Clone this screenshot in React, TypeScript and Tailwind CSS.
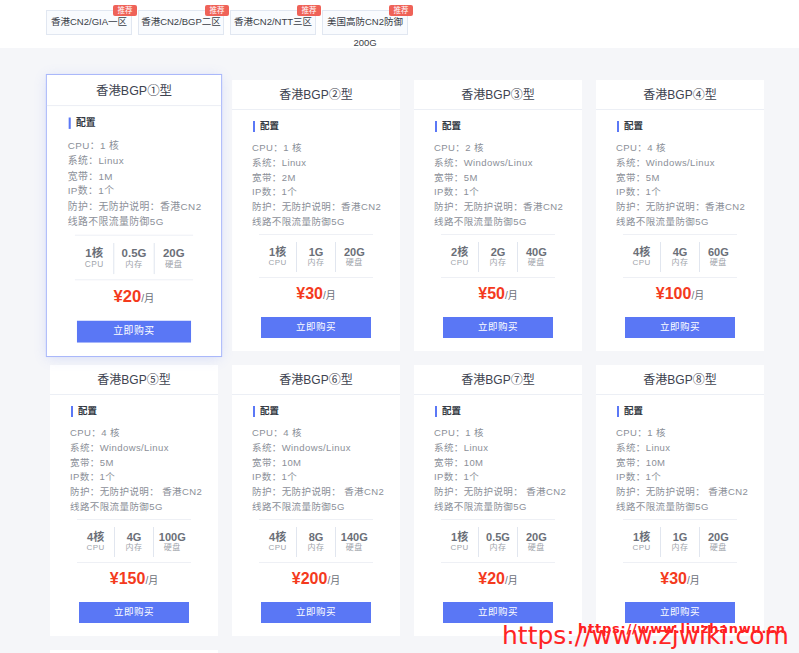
import { FunctionComponent } from "react";

interface Plan {
    title: string,
    cpu: string,
    os: string,
    bw: string,
    spaced: boolean,
    stats: string[],
    price: string
}

const tabs = ["香港CN2/GIA一区", "香港CN2/BGP二区", "香港CN2/NTT三区", "美国高防CN2防御200G"];

const plans: Plan[] = [
    { title: "香港BGP①型", cpu: "1", os: "Linux", bw: "1M", spaced: false, stats: ["1核", "0.5G", "20G"], price: "20" },
    { title: "香港BGP②型", cpu: "1", os: "Linux", bw: "2M", spaced: false, stats: ["1核", "1G", "20G"], price: "30" },
    { title: "香港BGP③型", cpu: "2", os: "Windows/Linux", bw: "5M", spaced: false, stats: ["2核", "2G", "40G"], price: "50" },
    { title: "香港BGP④型", cpu: "4", os: "Windows/Linux", bw: "5M", spaced: false, stats: ["4核", "4G", "60G"], price: "100" },
    { title: "香港BGP⑤型", cpu: "4", os: "Windows/Linux", bw: "5M", spaced: true, stats: ["4核", "4G", "100G"], price: "150" },
    { title: "香港BGP⑥型", cpu: "4", os: "Windows/Linux", bw: "10M", spaced: true, stats: ["4核", "8G", "140G"], price: "200" },
    { title: "香港BGP⑦型", cpu: "1", os: "Linux", bw: "10M", spaced: true, stats: ["1核", "0.5G", "20G"], price: "20" },
    { title: "香港BGP⑧型", cpu: "1", os: "Linux", bw: "10M", spaced: true, stats: ["1核", "1G", "20G"], price: "30" },
    { title: "香港BGP⑨型", cpu: "2", os: "Linux", bw: "10M", spaced: true, stats: ["2核", "2G", "40G"], price: "50" },
];

const statLabels = ["CPU", "内存", "硬盘"];

const PlanCard: FunctionComponent<{ plan: Plan, active?: boolean }> = ({ plan, active }) => {
    return (
        <div className={active
            ? "bg-white h-[271px] flex flex-col scale-[1.037] ring-1 ring-[#a9b8fa] shadow-[0_2px_12px_rgba(90,119,245,0.18)] relative z-10"
            : "bg-white h-[271px] flex flex-col"}>
            <div className="h-[30px] border-b border-[#eceff5] flex items-center justify-center text-[12px] text-[#3e4350]">
                {plan.title}
            </div>

            <div className="pl-[21px] mt-[10px] h-[12px] flex items-center">
                <span className="w-[2px] h-[11px] bg-[#5b78f6]"></span>
                <span className="ml-[5px] text-[9.5px] font-bold text-[#333842]">配置</span>
            </div>

            <ul className="pl-[20px] mt-[9px] text-[9.5px] leading-[14.8px] tracking-[0.4px] text-[#8b8f98]">
                <li>CPU：{plan.cpu} 核</li>
                <li>系统：{plan.os}</li>
                <li>宽带：{plan.bw}</li>
                <li>IP数：1个</li>
                <li>防护：无防护说明：{plan.spaced ? "  " : ""}香港CN2</li>
                <li>线路不限流量防御5G</li>
            </ul>

            <div className="mx-[27px] mt-[4px] h-[44px] border-y border-[#eef0f5] flex items-center">
                {plan.stats.map((s, i) => {
                    return (
                        <div key={i} className={i > 0
                            ? "flex-1 h-[30px] mt-[2px] flex flex-col items-center justify-center border-l border-[#e1e6ef]"
                            : "flex-1 h-[30px] mt-[2px] flex flex-col items-center justify-center"}>
                            <span className="text-[11px] leading-[12px] font-bold text-[#6b6f78]">{s}</span>
                            <span className="text-[8px] leading-[10px] text-[#a0a4ab] tracking-[0.5px]">{statLabels[i]}</span>
                        </div>
                    )
                })}
            </div>

            <div className="mt-[6px] h-[20px] flex items-end justify-center">
                <span className="text-[16px] leading-[20px] font-bold text-[#f43a1d]">¥{plan.price}</span>
                <span className="text-[10px] leading-[16px] text-[#6b6f78]">/月</span>
            </div>

            <button className="mt-[13px] mx-auto w-[110px] h-[21px] bg-[#5a77f5] text-white text-[9.5px] tracking-[0.5px]">
                立即购买
            </button>
        </div>
    );
}

const App: FunctionComponent = () => {
    return (
        <div className="relative min-h-screen bg-[#f5f6f9] font-['Liberation_Sans','Noto_Sans_CJK_SC',sans-serif] overflow-hidden">
            <div className="h-[48px] bg-white">
                <div className="flex gap-[6px] pl-[46px] pt-[10px]">
                    {tabs.map((t, i) => {
                        return (
                            <div key={i} className="relative w-[86px] h-[25px] border border-[#e1e7f1] bg-[#f9fbfe] text-center text-[9.5px] leading-[21px] text-[#3a3e47]">
                                {t}
                                <span className="absolute -top-[6px] -right-[6px] w-[24px] h-[11px] rounded-[2px] bg-[#ef6258] text-white text-[7.5px] leading-[11px] text-center">推荐</span>
                            </div>
                        )
                    })}
                </div>
            </div>

            <div className="pl-[50px] pt-[32px] pb-[40px] grid grid-cols-[repeat(4,168px)] gap-[14px]">
                {plans.map((p, i) => <PlanCard key={i} plan={p} active={i === 0} />)}
            </div>

            <span className="absolute left-[578px] top-[622px] z-20 font-['DejaVu_Sans'] font-bold text-[13px] leading-[13px] tracking-[0.75px] text-[#ff1e1e]">https://www.liuzhanwu.cn</span>
            <span className="absolute left-[502px] top-[623px] z-20 font-['DejaVu_Sans'] text-[25px] leading-[25px] text-[#ff2424]">https://www.zjwiki.com</span>
        </div>
    );
}

export default App;
